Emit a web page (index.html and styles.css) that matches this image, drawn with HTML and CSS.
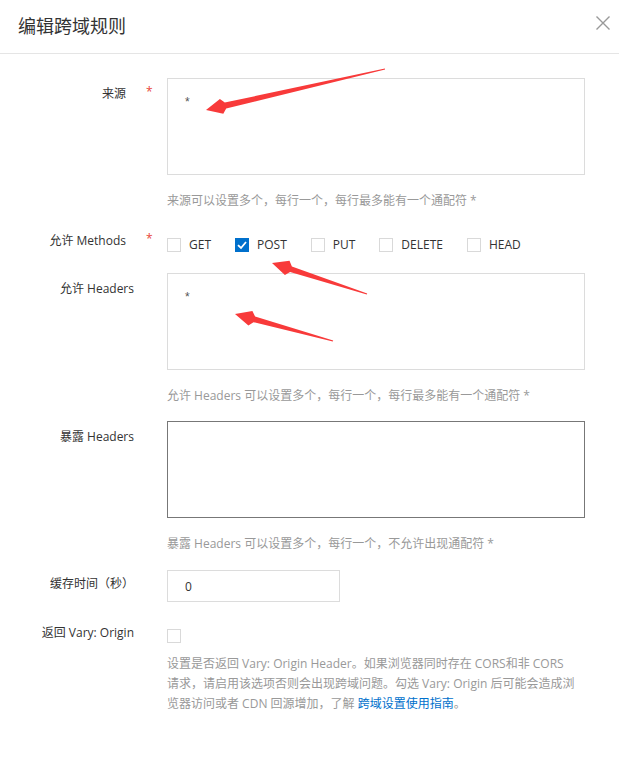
FILE: index.html
```html
<!DOCTYPE html>
<html lang="zh-CN">
<head>
<meta charset="utf-8">
<title>编辑跨域规则</title>
<link rel="stylesheet" href="styles.css">
</head>
<body>
<div class="dialog">
  <div class="header">
    <h1 class="title">编辑跨域规则</h1>
    <svg class="close" viewBox="0 0 14 14" width="14" height="14"><path d="M0.5 0.5 L13.5 13.5 M13.5 0.5 L0.5 13.5" stroke="#999" stroke-width="1.4" fill="none"/></svg>
  </div>
  <div class="form">
    <div class="row row-origin">
      <div class="label label-req">来源</div>
      <div class="star">*</div>
      <div class="control">
        <textarea class="area">*</textarea>
        <div class="help">来源可以设置多个，每行一个，每行最多能有一个通配符 *</div>
      </div>
    </div>
    <div class="row row-methods">
      <div class="label label-req">允许 Methods</div>
      <div class="star">*</div>
      <div class="control checks">
        <label class="opt"><span class="box"></span><span>GET</span></label>
        <label class="opt"><span class="box box-on"><svg viewBox="0 0 14 14" width="14" height="14"><polyline points="3,7.2 6,10 11,4" fill="none" stroke="#fff" stroke-width="1.8"/></svg></span><span>POST</span></label>
        <label class="opt"><span class="box"></span><span>PUT</span></label>
        <label class="opt"><span class="box"></span><span>DELETE</span></label>
        <label class="opt"><span class="box"></span><span>HEAD</span></label>
      </div>
    </div>
    <div class="row row-allow">
      <div class="label">允许 Headers</div>
      <div class="star"></div>
      <div class="control">
        <textarea class="area">*</textarea>
        <div class="help">允许 Headers 可以设置多个，每行一个，每行最多能有一个通配符 *</div>
      </div>
    </div>
    <div class="row row-expose">
      <div class="label">暴露 Headers</div>
      <div class="star"></div>
      <div class="control">
        <textarea class="area area-focus"></textarea>
        <div class="help">暴露 Headers 可以设置多个，每行一个，不允许出现通配符 *</div>
      </div>
    </div>
    <div class="row row-cache">
      <div class="label label-cache">缓存时间（秒）</div>
      <div class="star"></div>
      <div class="control">
        <input class="input" type="text" value="0">
      </div>
    </div>
    <div class="row row-vary">
      <div class="label label-vary">返回 Vary: Origin</div>
      <div class="star"></div>
      <div class="control">
        <span class="box box-vary"></span>
        <p class="note">设置是否返回 Vary: Origin Header。如果浏览器同时存在 CORS和非 CORS<br>请求，请启用该选项否则会出现跨域问题。勾选 Vary: Origin 后可能会造成浏<br>览器访问或者 CDN 回源增加，了解 <a class="link" href="#">跨域设置使用指南</a>。</p>
      </div>
    </div>
  </div>
  <svg class="marks" viewBox="0 0 619 760" width="619" height="760">
    <polygon fill="#f83a3a" points="206,110 219.9,99.1 224.8,102.6 384.9,68.4 385.1,69.6 226.2,108.5 223.3,113.7"/>
    <polygon fill="#f83a3a" points="272,263 289.5,260.8 291.9,266.4 367.2,293.4 366.8,294.6 290.1,272 284.9,275.1"/>
    <polygon fill="#f83a3a" points="235,314 252.4,311 255.1,316.4 333.2,340.4 332.8,341.6 253.5,322.2 248.4,325.5"/>
  </svg>
</div>
</body>
</html>
```
FILE: styles.css
```css
* { box-sizing: border-box; }
html, body { margin: 0; padding: 0; background: #fff; }
body {
  font-family: "Open Sans", "Noto Sans CJK SC", sans-serif;
  font-size: 12px;
  color: #333;
}
.dialog { position: relative; width: 619px; height: 760px; overflow: hidden; }
.header {
  height: 54px;
  border-bottom: 1px solid #e5e5e5;
  display: flex;
  justify-content: space-between;
  align-items: flex-start;
  padding: 14px 9px 0 18px;
}
.title {
  margin: 0;
  font-family: "Noto Sans CJK SC", sans-serif;
  font-size: 18px;
  line-height: 22px;
  font-weight: normal;
  color: #333;
}
.close { margin-top: 2px; display: block; }
.form { padding-top: 24px; }
.row { display: grid; grid-template-columns: 134px 33px 418px; align-items: start; }
.label { text-align: right; line-height: 16px; padding-top: 8px; white-space: nowrap; color: #333; }
.label-req { padding-right: 8px; }
.star { color: #e84738; line-height: 16px; padding-top: 6px; padding-left: 12px; }
.control { min-width: 0; }
.area {
  display: block;
  width: 418px;
  height: 97px;
  margin: 0;
  border: 1px solid #dcdcdc;
  padding: 15px 17px;
  font-family: "Liberation Sans", "Noto Sans CJK SC", sans-serif;
  font-size: 12px;
  line-height: 16px;
  color: #555;
  resize: none;
  outline: none;
  background: #fff;
}
.area-focus { border-color: #777; }
.help { margin-top: 18px; line-height: 16px; color: #999; white-space: nowrap; }
.row-origin { margin-bottom: 16px; }
.row-methods { margin-bottom: 21px; }
.row-allow { margin-bottom: 17px; }
.row-expose { margin-bottom: 18px; }
.row-cache { margin-bottom: 19px; }
.checks { display: flex; gap: 24px; padding-top: 13px; }
.opt { display: flex; align-items: center; gap: 8px; height: 14px; line-height: 16px; color: #333; white-space: nowrap; }
.box {
  display: block;
  width: 14px;
  height: 14px;
  border: 1px solid #d9d9d9;
  background: #fff;
  flex: none;
}
.box-on { background: #0070cc; border-color: #0070cc; position: relative; }
.box-on svg { position: absolute; left: -1px; top: -1px; }
.input {
  display: block;
  width: 173px;
  height: 32px;
  margin: 0;
  border: 1px solid #dcdcdc;
  padding: 0 17px;
  font-family: "Open Sans", "Noto Sans CJK SC", sans-serif;
  font-size: 12px;
  color: #333;
  outline: none;
}
.label-cache { padding-top: 6px; }
.label-vary { padding-top: 4px; }
.box-vary { margin-top: 8px; }
.note { margin: 11px 0 0; line-height: 20px; color: #999; white-space: nowrap; }
.link { color: #0070cc; text-decoration: none; }
.marks { position: absolute; left: 0; top: 0; pointer-events: none; }
```
